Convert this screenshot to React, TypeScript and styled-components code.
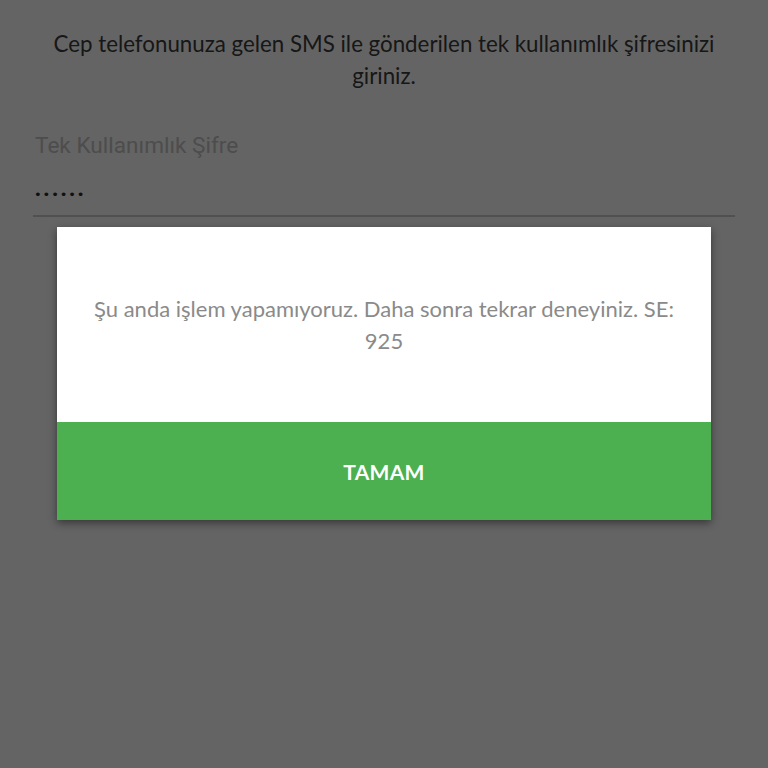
import React, { ReactElement } from "react";
import styled, { createGlobalStyle } from "styled-components";

export default function App(): ReactElement {
  return (
    <>
      <GlobalStyle />
      <Page>
        <Content>
          <Instruction>
            Cep telefonunuza gelen SMS ile gönderilen tek kullanımlık şifresinizi giriniz.
          </Instruction>
          <Field>
            <Label>Tek Kullanımlık Şifre</Label>
            <Value>••••••</Value>
          </Field>
        </Content>
        <Overlay />
        <Dialog>
          <Message>
            Şu anda işlem yapamıyoruz. Daha sonra tekrar deneyiniz. SE: 925
          </Message>
          <OkButton>TAMAM</OkButton>
        </Dialog>
      </Page>
    </>
  );
}

const GlobalStyle = createGlobalStyle`
  html, body {
    margin: 0;
    padding: 0;
    background: #fff;
  }
  * {
    box-sizing: border-box;
  }
`;

const Page = styled.div`
  position: relative;
  width: 768px;
  height: 768px;
  overflow: hidden;
  background: #fff;
`;

const Content = styled.div`
  padding: 28px 33px 0;
`;

const Instruction = styled.p`
  margin: 0;
  padding: 0 16px;
  text-align: center;
  font-family: Lato, "Open Sans", sans-serif;
  font-size: 22.3px;
  line-height: 32px;
  color: #3c3c3c;
`;

const Field = styled.div`
  margin-top: 40px;
  border-bottom: 2px solid #cccccc;
  padding-bottom: 6px;
`;

const Label = styled.div`
  padding-left: 2px;
  font-family: Roboto, "Noto Sans", sans-serif;
  font-size: 22.6px;
  line-height: 28px;
  color: #c4c4c4;
`;

const Value = styled.div`
  margin-top: 21px;
  padding-left: 1px;
  font-family: "DejaVu Sans", sans-serif;
  font-size: 13px;
  letter-spacing: 0.9px;
  line-height: 28px;
  color: #2a2a2a;
`;

const Overlay = styled.div`
  position: absolute;
  inset: 0;
  background: rgba(0, 0, 0, 0.608);
`;

const Dialog = styled.div`
  position: absolute;
  top: 227px;
  left: 57px;
  width: 654px;
  background: #fff;
  box-shadow: 0 3px 8px rgba(0, 0, 0, 0.45);
`;

const Message = styled.div`
  height: 195px;
  padding: 0 30px;
  display: flex;
  align-items: center;
  justify-content: center;
  text-align: center;
  font-family: Lato, "Open Sans", sans-serif;
  font-size: 22px;
  line-height: 32px;
  color: #8a8a8a;
`;

const OkButton = styled.button`
  display: block;
  width: 100%;
  height: 98px;
  border: none;
  background: #4caf50;
  color: #fff;
  font-family: Lato, "Open Sans", sans-serif;
  font-weight: 700;
  font-size: 21px;
  letter-spacing: 0.3px;
  cursor: pointer;
`;
